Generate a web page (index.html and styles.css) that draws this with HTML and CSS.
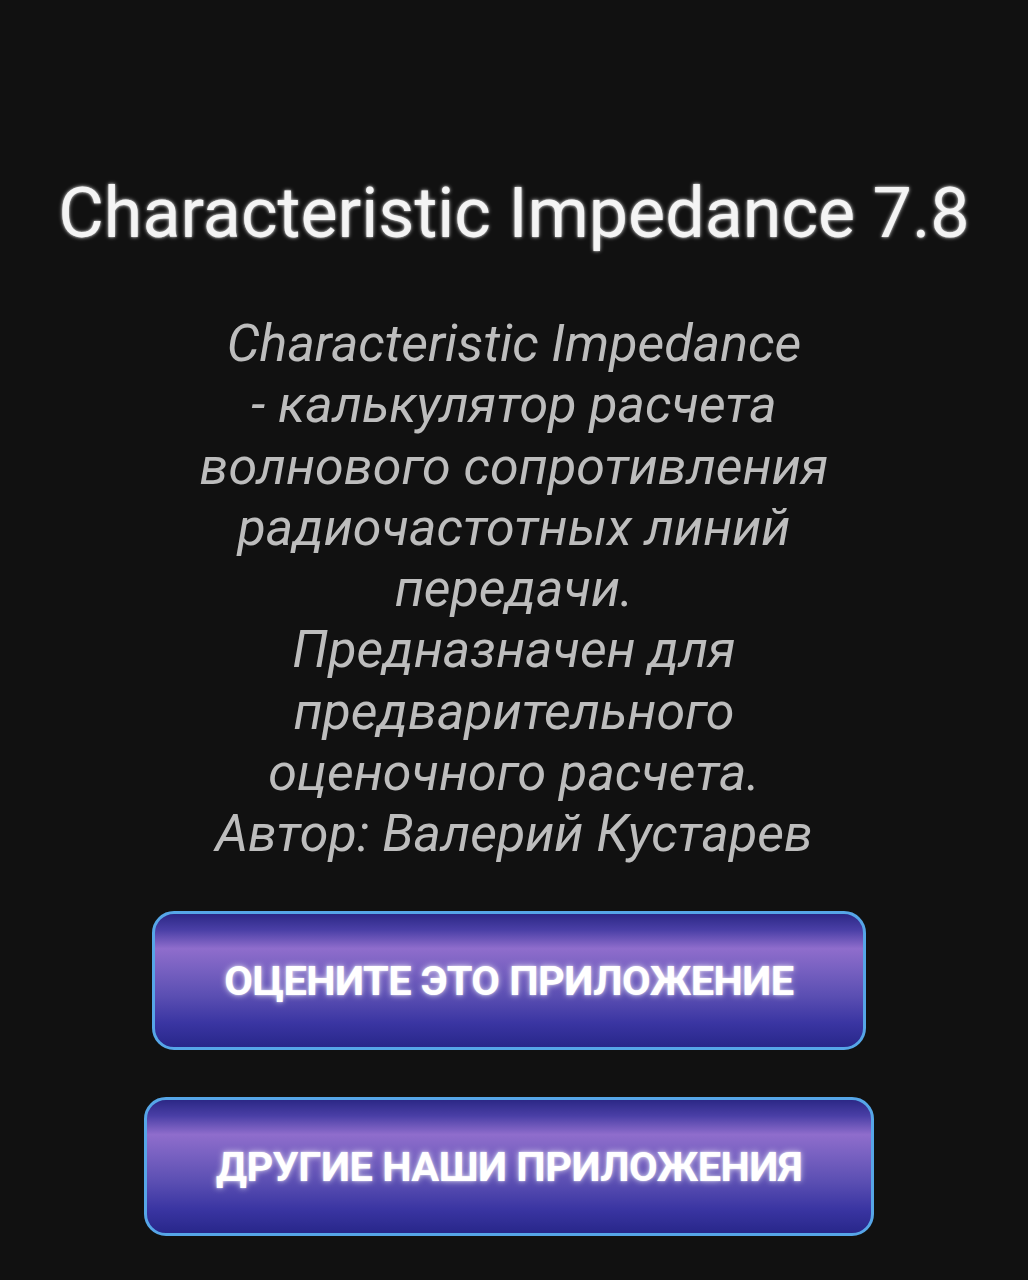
FILE: index.html
```html
<!DOCTYPE html>
<html lang="ru">
<head>
<meta charset="utf-8">
<title>Characteristic Impedance</title>
<link rel="stylesheet" href="styles.css">
</head>
<body>
<main class="screen">
  <h1 class="title">Characteristic Impedance 7.8</h1>
  <p class="about">Characteristic Impedance<br>- калькулятор расчета<br>волнового сопротивления<br>радиочастотных линий<br>передачи.<br>Предназначен для<br>предварительного<br>оценочного расчета.<br>Автор: Валерий Кустарев</p>
  <div class="actions">
    <button class="btn" type="button">ОЦЕНИТЕ ЭТО ПРИЛОЖЕНИЕ</button>
    <button class="btn" type="button">ДРУГИЕ НАШИ ПРИЛОЖЕНИЯ</button>
  </div>
</main>
</body>
</html>
```
FILE: styles.css
```css
html, body {
  margin: 0;
  padding: 0;
  background: #111111;
}
.screen {
  width: 1028px;
  height: 1280px;
  display: flex;
  flex-direction: column;
  align-items: center;
  font-family: Roboto, "Noto Sans", sans-serif;
  padding-top: 170px;
  box-sizing: border-box;
}
.title {
  margin: 0;
  font-size: 70px;
  font-weight: 400;
  line-height: 86px;
  color: #f4f4f4;
  text-shadow: 0 0 4px rgba(255,255,255,0.7), 0 0 2px rgba(255,255,255,0.6);
  white-space: nowrap;
}
.about {
  margin: 57px 0 0;
  font-size: 52px;
  font-style: italic;
  font-weight: 400;
  line-height: 61.3px;
  color: #bdbdbd;
  text-align: center;
}
.actions {
  margin-top: 46px;
  margin-right: 10px;
  display: flex;
  flex-direction: column;
  align-items: center;
  gap: 47px;
}
.btn {
  height: 139px;
  padding: 0 69px;
  border: 3px solid #56a6e8;
  border-radius: 22px;
  background: linear-gradient(to bottom,
    #2c2886 0%,
    #4a3fa6 12%,
    #8f6dcc 26%,
    #7a62c2 40%,
    #5a4eb2 62%,
    #3a35a2 82%,
    #28278a 100%);
  color: #ffffff;
  font-family: Roboto, "Noto Sans", sans-serif;
  font-weight: 700;
  font-size: 41.5px;
  letter-spacing: -0.5px;
  text-shadow: 0 0 6px rgba(255,255,255,0.75), 0 0 2px rgba(255,255,255,0.6);
  cursor: pointer;
}
```
